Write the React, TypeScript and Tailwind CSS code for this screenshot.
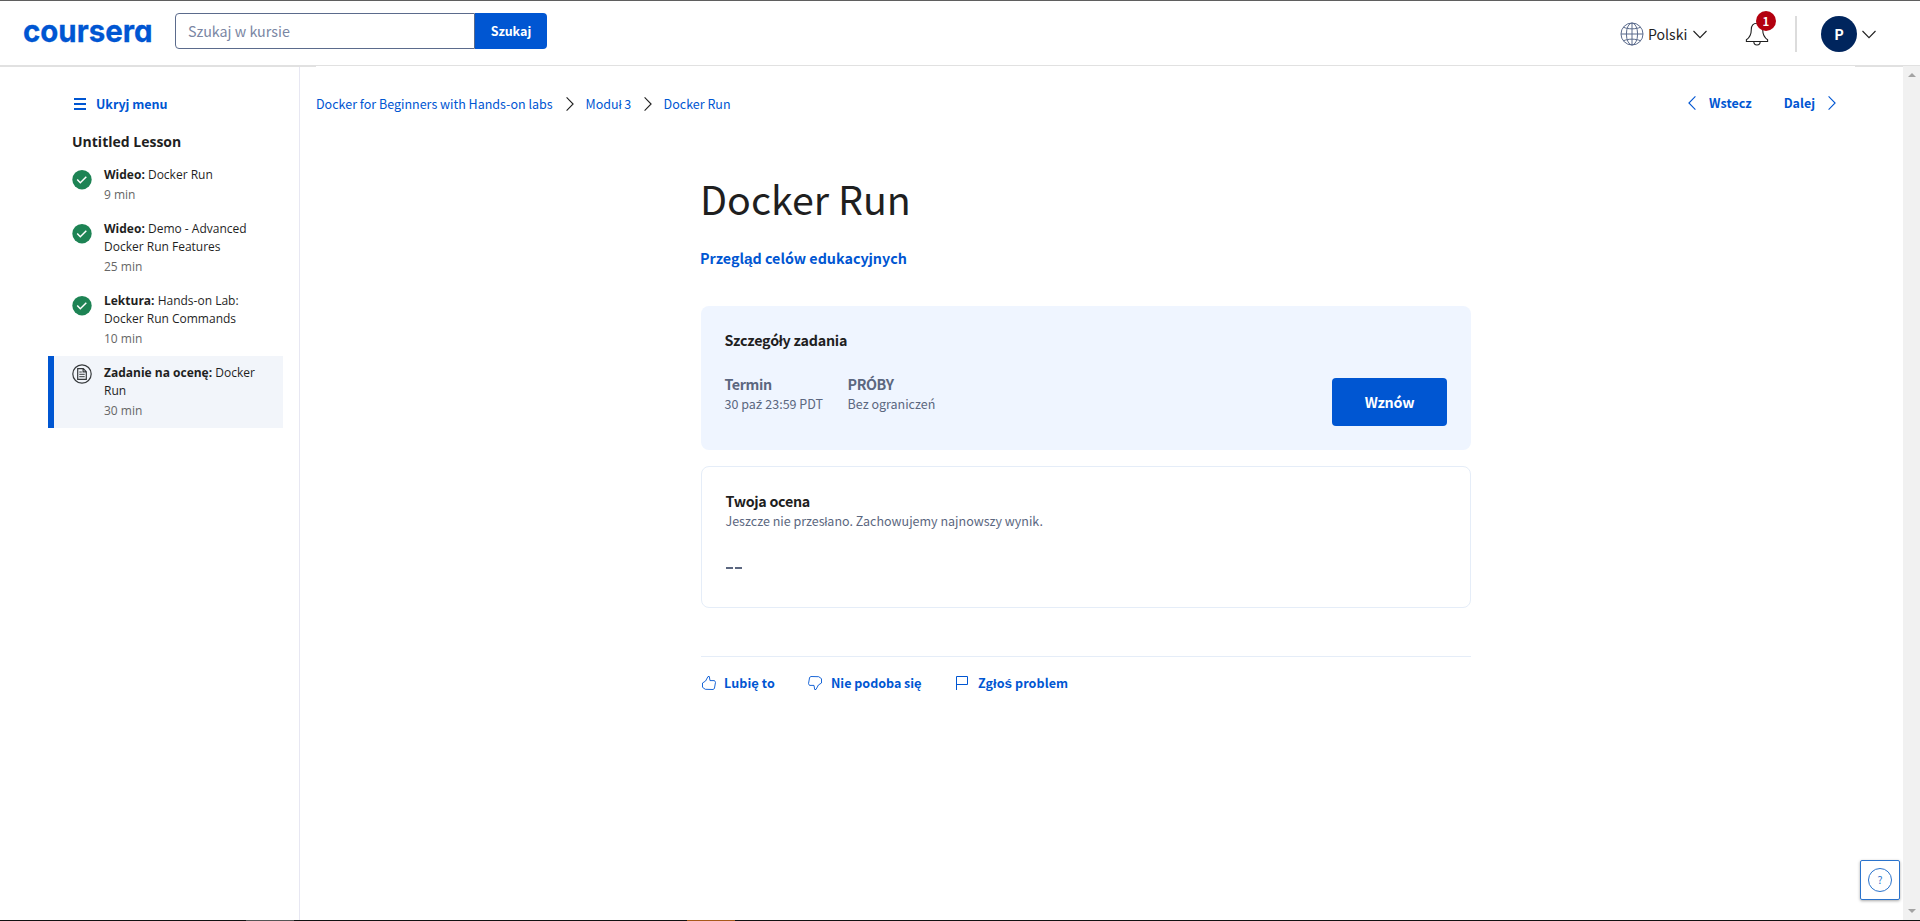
import type { ReactNode } from "react";

/* Letters that the main face lacks are set in the fallback face. */
function T({ children }: { children: string }) {
  return (
    <>
      {children.split(/([ąęśź])/).map((part, i) =>
        i % 2 ? (
          <span key={i} className="font-['Liberation_Sans'] text-[1.08em] leading-none">
            {part}
          </span>
        ) : (
          part
        ),
      )}
    </>
  );
}

function Chevron({ className, dir }: { className: string; dir: "left" | "right" | "down" }) {
  if (dir === "down") {
    return (
      <svg className={className} width="14" height="9" viewBox="0 0 14 9" fill="none" stroke="currentColor" strokeWidth="1.1">
        <path d="M.5 1 7 7.6 13.5 1" />
      </svg>
    );
  }
  return (
    <svg className={className} width="8" height="14" viewBox="0 0 8 14" fill="none" stroke="currentColor" strokeWidth="1.1">
      <path d={dir === "left" ? "M7.4.4.9 7l6.5 6.6" : "M.6.4 7.1 7 .6 13.6"} />
    </svg>
  );
}

function Header() {
  return (
    <header className="flex h-[65px] shrink-0 border-t border-[#5f5f5f] pl-5">
      <svg className="mt-[5px] shrink-0 overflow-visible" width="137" height="54" viewBox="-4 -10 137 54" role="img" aria-label="coursera">
        <text
          x="-1"
          y="26"
          textLength="129.5"
          lengthAdjust="spacingAndGlyphs"
          fill="#0056d2"
          stroke="#0056d2"
          strokeWidth=".3"
          className="font-['Inter'] text-[31.5px] font-bold"
          style={{ fontFeatureSettings: '"cv11" 1' }}
        >
          coursera
        </text>
      </svg>
      <form className="mt-3 ml-[18px] flex h-9">
        <div className="flex w-[300px] items-center rounded-l-[4px] border border-[#5b6b8c] pl-3 text-[14.3px] leading-5 text-[#7a86a3]">Szukaj w kursie</div>
        <button type="button" className="w-[72px] rounded-r-[4px] bg-[#0056d2] text-[12.5px] leading-5 font-bold text-white">
          Szukaj
        </button>
      </form>
      <div className="ml-auto flex">
        <svg className="mt-[21px]" width="24" height="24" viewBox="0 0 24 24" fill="none" stroke="#5b6b8c" strokeWidth="1">
          <circle cx="12" cy="12" r="11" />
          <ellipse cx="12" cy="12" rx="5.6" ry="11" />
          <path d="M12 1v22M1 12h22M3.4 5.2c5 2.2 12.2 2.2 17.2 0M3.4 18.8c5-2.2 12.2-2.2 17.2 0" />
        </svg>
        <span className="mt-[23px] ml-1 w-10 text-[14.1px] leading-5 text-[#1f1f1f]">Polski</span>
        <Chevron dir="down" className="mt-[29px] ml-[5px] text-[#1f1f1f]" />
        <div className="relative mt-[21px] ml-[38px] h-6 w-6">
          <svg width="24" height="24" viewBox="0 0 24 24" fill="none" stroke="#1f1f1f" strokeWidth="1.1">
            <path d="M12 1.2c-4 0-5.7 2.8-5.7 6.3 0 5-1.8 8.2-4.9 10.3v1.7h21.2v-1.7C19.5 15.7 17.7 12.5 17.7 7.5c0-3.5-1.7-6.3-5.7-6.3zM8.8 19.6a3.2 3.4 0 0 0 6.4 0" />
          </svg>
          <span className="absolute -top-[11px] left-[11px] flex h-5 w-5 items-center justify-center rounded-full bg-[#b3000f] text-[11.5px] leading-5 font-bold text-white">1</span>
        </div>
        <div className="mt-[15px] ml-[26px] h-9 w-0.5 bg-[#dcdcdc]" />
        <div className="mt-[15px] ml-6 flex h-9 w-9 items-center justify-center rounded-full bg-[#00255d] text-[14.3px] leading-5 font-bold text-white">P</div>
        <Chevron dir="down" className="mt-[29px] mr-11 ml-[5px] text-[#1f1f1f]" />
      </div>
    </header>
  );
}

function DoneIcon() {
  return (
    <svg className="mt-1 shrink-0" width="20" height="20" viewBox="0 0 20 20">
      <circle cx="10" cy="9.7" r="9.7" fill="#1d8354" />
      <path d="m5.2 9.5 3.1 3.2 6-6" fill="none" stroke="#fff" strokeWidth="1.5" />
    </svg>
  );
}

function TaskIcon() {
  return (
    <svg className="shrink-0" width="20" height="20" viewBox="0 0 20 20" fill="none" stroke="#373a3c">
      <circle cx="10" cy="10" r="9.2" strokeWidth="1.2" />
      <path strokeWidth="1.2" d="M5.7 4.7h5.6l3 3v7.6H5.7zM11.1 4.7v3.2h3.2" />
      <path strokeWidth="1" d="M7.3 8h2.5M7.3 10.3h5.4M7.3 12.7h5.4" />
    </svg>
  );
}

function Lesson({ kind, title, time, active }: { kind: string; title: ReactNode; time: string; active?: boolean }) {
  return (
    <li className={active ? "flex border-l-6 border-[#0056d2] bg-[#f2f5fa] py-2 pl-[18px]" : "flex py-2 pl-6"}>
      {active ? <TaskIcon /> : <DoneIcon />}
      <div className="ml-3 text-xs leading-[18px] text-[#1f1f1f]">
        <p>
          <b>{kind}</b> {title}
        </p>
        <p className="mt-0.5 text-[#666]">{time}</p>
      </div>
    </li>
  );
}

function Sidebar() {
  return (
    <aside className="w-[300px] shrink-0 border-r border-[#e7e7f2] pl-12">
      <div className="mt-7 ml-[26px] flex h-5 items-center text-[12.5px] leading-5 font-bold text-[#0056d2]">
        <svg className="mr-2.5" width="12" height="12" viewBox="0 0 12 12" fill="currentColor">
          <path d="M0 0h12v2H0zM0 5h12v2H0zM0 10h12v2H0z" />
        </svg>
        Ukryj menu
      </div>
      <div className="w-[235px] font-['Open_Sans',sans-serif]">
        <h2 className="mt-[18px] ml-6 text-sm leading-5 font-bold text-[#1f1f1f]">Untitled Lesson</h2>
        <ul className="mt-[6px]">
          <Lesson kind="Wideo:" title="Docker Run" time="9 min" />
          <Lesson kind="Wideo:" title={<>Demo - Advanced<br />Docker Run Features</>} time="25 min" />
          <Lesson kind="Lektura:" title={<>Hands-on Lab:<br />Docker Run Commands</>} time="10 min" />
          <Lesson active kind="Zadanie na ocenę:" title={<>Docker<br />Run</>} time="30 min" />
        </ul>
      </div>
    </aside>
  );
}

function TopBar() {
  return (
    <div className="mt-7 flex h-5 pr-[67px] pl-4 text-[12.5px] leading-5 text-[#0056d2]">
      <nav className="flex items-center">
        <a>Docker for Beginners with Hands-on labs</a>
        <Chevron dir="right" className="mr-3 ml-[13px] text-[#1f1f1f]" />
        <a className="w-[46px] whitespace-nowrap">Moduł 3</a>
        <Chevron dir="right" className="mr-3 ml-3 text-[#1f1f1f]" />
        <a>Docker Run</a>
      </nav>
      <div className="-mt-0.5 ml-auto flex items-center font-bold">
        <Chevron dir="left" className="mr-[13px]" />
        <a>Wstecz</a>
        <a className="ml-8">Dalej</a>
        <Chevron dir="right" className="ml-[13px]" />
      </div>
    </div>
  );
}

function Details() {
  return (
    <section className="mt-[38px] flex h-36 justify-between rounded-lg bg-[#eff5ff] pr-6 pl-[23.5px]">
      <div>
        <h3 className="mt-6 text-[14.3px] leading-5 font-bold tracking-[-0.22px] text-[#1f1f1f]">Szczegóły zadania</h3>
        <dl className="mt-6 flex gap-x-6 text-[#5b6780]">
          <div className="w-[99px]">
            <dt className="text-[14.3px] leading-5 font-bold tracking-[-0.4px]">Termin</dt>
            <dd className="text-[12.5px] leading-5 whitespace-nowrap">
              <T>30 paź 23:59 PDT</T>
            </dd>
          </div>
          <div>
            <dt className="text-[14.3px] leading-5 font-bold tracking-[-0.4px]">PRÓBY</dt>
            <dd className="text-[12.5px] leading-5">Bez ograniczeń</dd>
          </div>
        </dl>
      </div>
      <button type="button" className="mt-[72px] h-12 w-[115px] rounded-[4px] bg-[#0056d2] text-[14.3px] leading-5 font-bold tracking-[-0.2px] text-white">
        Wznów
      </button>
    </section>
  );
}

function Grade() {
  return (
    <section className="mt-4 h-[142px] rounded-lg border border-[#e5edf8] px-[23.5px] pt-6">
      <h3 className="text-[14.3px] leading-5 font-bold tracking-[-0.3px] text-[#1f1f1f]">Twoja ocena</h3>
      <p className="text-[12.5px] leading-5 text-[#5b6780]">Jeszcze nie przesłano. Zachowujemy najnowszy wynik.</p>
      <div className="mt-9 ml-[0.5px] flex gap-0.5" role="img" aria-label="--">
        <span className="h-0.5 w-[7px] bg-[#5b6780]" />
        <span className="h-0.5 w-[7px] bg-[#5b6780]" />
      </div>
    </section>
  );
}

function Feedback() {
  const thumb = "M.5 7 3.6 5 6 .5h1.3L8 4.6h4.5l1 1.7-1.1 6.3-1.4.9-7.7-.2L.5 11.3z";
  return (
    <div className="mt-12 flex border-t border-[#e5edf8] pt-4 text-[12.5px] leading-5 font-bold whitespace-nowrap text-[#0056d2]">
      <a className="flex w-[107px] items-center">
        <svg className="mr-2 ml-px" width="14" height="14" viewBox="0 0 14 14" fill="none" stroke="currentColor" strokeWidth=".9" strokeLinejoin="round">
          <path d={thumb} />
        </svg>
        <span className="tracking-[0.1px]"><T>Lubię to</T></span>
      </a>
      <a className="flex w-[147px] items-center">
        <svg className="mr-[9px]" width="14" height="14" viewBox="0 0 14 14" fill="none" stroke="currentColor" strokeWidth=".9" strokeLinejoin="round">
          <path d={thumb} transform="rotate(180 7 7)" />
        </svg>
        <span><T>Nie podoba się</T></span>
      </a>
      <a className="flex items-center">
        <svg className="mr-[9px]" width="14" height="14" viewBox="0 0 14 14" fill="none" stroke="currentColor">
          <path d="M1.5 14V.5h11v8h-11" />
        </svg>
        <span className="tracking-[0.08px]"><T>Zgłoś problem</T></span>
      </a>
    </div>
  );
}

function Scrollbar() {
  return (
    <div className="flex w-[17px] shrink-0 flex-col items-center justify-between bg-[#f1f1f1] py-[7px]">
      <svg width="8" height="4" viewBox="0 0 8 4" fill="#a3a3a3">
        <path d="M4 0 8 4H0z" />
      </svg>
      <svg width="8" height="4" viewBox="0 0 8 4" fill="#a3a3a3">
        <path d="M0 0h8L4 4z" />
      </svg>
    </div>
  );
}

export default function App() {
  return (
    <div className="relative flex h-[921px] w-[1920px] flex-col overflow-hidden bg-white font-['Noto_Sans_CJK_SC',sans-serif]">
      <Header />
      <div className="h-px shrink-0 bg-[#e1e1e1]" />
      <div className="flex min-h-0 flex-1">
        <div className="relative flex flex-1">
          <div className="absolute top-0 left-0 h-px w-[316px] bg-[#e1e1e1]" />
          <div className="absolute top-0 right-0 h-px w-12 bg-[#e1e1e1]" />
          <Sidebar />
          <main className="flex-1">
            <TopBar />
            <div className="ml-[401px] w-[770px]">
              <h1 className="mt-[54px] -ml-px text-[39.4px] leading-[60px] text-[#1f1f1f]">Docker Run</h1>
              <p className="mt-5 -ml-px text-[14.3px] leading-5 font-bold text-[#0056d2]">
                <T>Przegląd celów edukacyjnych</T>
              </p>
              <Details />
              <Grade />
              <Feedback />
            </div>
          </main>
        </div>
        <Scrollbar />
      </div>
      <div className="flex h-px shrink-0 bg-[#111]">
        <div className="ml-[246px] w-12 bg-[#555]" />
        <div className="ml-[393px] w-12 bg-[#a85a1a]" />
      </div>
      <button
        type="button"
        className="absolute right-5 bottom-[21px] flex h-10 w-10 items-center justify-center rounded-[2px] border border-[#2a73cc] bg-white text-[#2a73cc] shadow-[0_1px_3px_rgba(0,0,0,0.35)]"
      >
        <span className="flex h-6 w-6 items-center justify-center rounded-full border border-[#2a73cc] text-[10.5px] leading-4">?</span>
      </button>
    </div>
  );
}
